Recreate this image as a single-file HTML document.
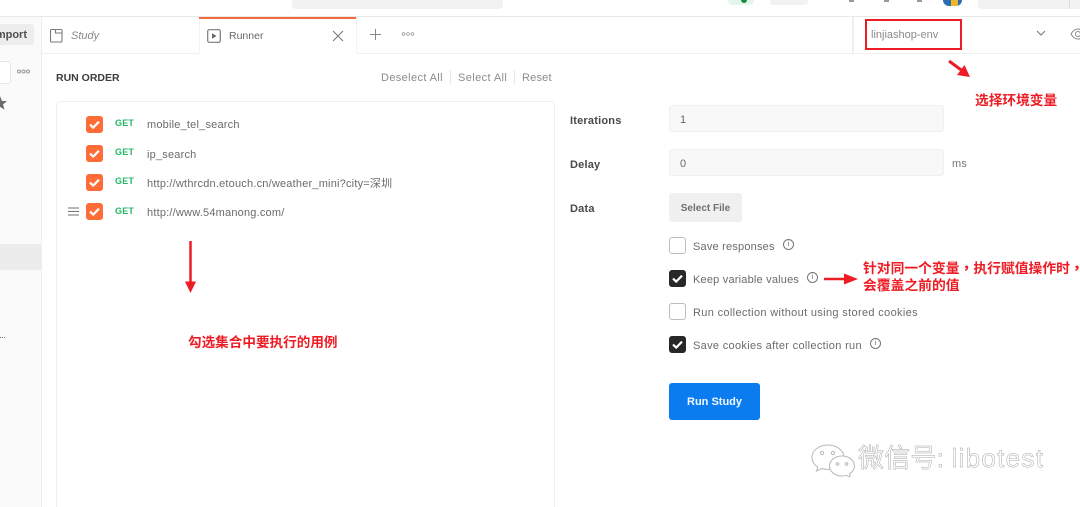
<!DOCTYPE html>
<html><head><meta charset="utf-8">
<style>
html,body{margin:0;padding:0;width:1080px;height:507px;overflow:hidden}
#w{position:absolute;left:0;top:0;width:1080px;height:507px;overflow:hidden;background:#fff;font-family:"Liberation Sans","Noto Sans CJK SC",sans-serif;color:#505050}
.a{position:absolute;white-space:nowrap}
.t{font-size:11px;line-height:14px;letter-spacing:.2px;color:#6b6b6b}
.cb{position:absolute;width:17px;height:17px;border-radius:3px;background:#ff6c37}
.cb svg,.ck svg{position:absolute;left:0;top:0}
.ck{position:absolute;left:669px;width:17px;height:17px;box-sizing:border-box;border-radius:3px;border:1px solid #bdbdbd;background:#fff}
.ck.on{background:#282828;border-color:#282828}
.ck.on svg{left:-1px;top:-1px}
.get{position:absolute;left:115px;font-size:9px;line-height:12px;font-weight:bold;color:#26b867;letter-spacing:.2px}
.lb{position:absolute;font-size:11px;line-height:14px;font-weight:bold;color:#4a4a4a;left:570px;letter-spacing:.2px}
.in{position:absolute;left:669px;height:27px;background:#f8f8f8;border:1px solid #f0f0f0;border-radius:3px;box-sizing:border-box;font-size:11px;line-height:29px;padding-left:10px;color:#666}
.red{position:absolute;white-space:nowrap;color:#ee1c25;font-weight:bold;font-size:13.700px;line-height:17px;font-family:"Liberation Sans","Noto Sans CJK SC",sans-serif}
.red b{font-family:"Noto Sans CJK TC",sans-serif}
.i{position:absolute;width:9px;height:9px;border:1px solid #777;border-radius:50%;font-size:7px;line-height:9px;text-align:center;color:#666}
.sep{position:absolute;width:1px;height:14px;background:#e6e6e6;top:70px}
</style></head><body><div id="w">

<!-- top bar -->
<div class="a" style="left:0;top:16px;width:1080px;height:1px;background:#e8e8e8"></div>
<div class="a" style="left:292px;top:0;width:211px;height:9px;background:#f2f2f2;border-radius:0 0 4px 4px"></div>
<div class="a" style="left:728px;top:0;width:26px;height:5px;background:#e3f8ea;border-radius:0 0 8px 8px"></div>
<div class="a" style="left:741px;top:0;width:6px;height:3px;background:#1c8a45;border-radius:0 0 3px 3px"></div>
<div class="a" style="left:770px;top:0;width:38px;height:5px;background:#f2f2f2;border-radius:0 0 3px 3px"></div>
<div class="a" style="left:849px;top:0;width:5px;height:2px;background:#999"></div>
<div class="a" style="left:884px;top:0;width:5px;height:2px;background:#999"></div>
<div class="a" style="left:917px;top:0;width:5px;height:2px;background:#999"></div>
<div class="a" style="left:943px;top:0;width:19px;height:6px;background:#2b6cb0;border-radius:0 0 10px 10px;overflow:hidden"><div style="position:absolute;left:8px;top:0;width:7px;height:6px;background:#f0b429"></div></div>
<div class="a" style="left:978px;top:0;width:102px;height:9px;background:#f2f2f2;border-radius:0 0 0 4px"></div>
<div class="a" style="left:1069px;top:0;width:1px;height:9px;background:#ddd"></div>

<!-- sidebar -->
<div class="a" style="left:0;top:17px;width:41px;height:490px;background:#fafafa"></div>
<div class="a" style="left:41px;top:17px;width:1px;height:490px;background:#efefef"></div>
<div class="a" style="left:0;top:24px;width:34px;height:21px;background:#ededed;border-radius:0 3px 3px 0;overflow:hidden"><span class="a" style="right:7px;top:4px;font-size:11px;line-height:14px;font-weight:bold;color:#505050">Import</span></div>
<div class="a" style="left:-5px;top:61px;width:14px;height:21px;border:1px solid #e6e6e6;border-radius:3px;background:#fff"></div>
<svg class="a" style="left:16px;top:68px" width="15" height="7"><circle cx="3" cy="3.500" r="1.500" fill="none" stroke="#999"/><circle cx="7.500" cy="3.500" r="1.500" fill="none" stroke="#999"/><circle cx="12" cy="3.500" r="1.500" fill="none" stroke="#999"/></svg>
<svg class="a" style="left:-7px;top:96px" width="16" height="15"><path d="M7 0l2 5h5l-4 3.400 1.600 5.400L7 10.800 2.400 13.800 4 8.400 0 5h5z" fill="#6b6b6b"/></svg>
<div class="a" style="left:0;top:244px;width:41px;height:26px;background:#ececec"></div>
<div class="a" style="left:0;top:337px;width:5px;height:1px;border-top:1px dotted #777"></div>

<!-- tab bar -->
<div class="a" style="left:42px;top:53px;width:1038px;height:1px;background:#f0f0f0"></div>
<div class="a" style="left:199px;top:17px;width:1px;height:37px;background:#f2f2f2"></div>
<div class="a" style="left:356px;top:17px;width:1px;height:37px;background:#f2f2f2"></div>
<div class="a" style="left:199px;top:53px;width:158px;height:1px;background:#fff"></div>
<div class="a" style="left:199px;top:17px;width:157px;height:2px;background:#f26b3a"></div>
<svg class="a" style="left:49px;top:28px" width="15" height="16" fill="none"><path d="M1.500 2.500a1 1 0 0 1 1-1h9.500a1 1 0 0 1 1 1v10.500a1 1 0 0 1-1 1H2.500a1 1 0 0 1-1-1z" stroke="#7a7a7a" stroke-width="1.100"/><path d="M6.500 1.500v3.500h6.500" stroke="#7a7a7a" stroke-width="1.100"/></svg>
<span class="a t" style="left:71px;top:29px;font-style:italic;color:#8a8a8a;letter-spacing:0">Study</span>
<svg class="a" style="left:207px;top:29px" width="14" height="14" fill="none"><rect x=".7" y=".7" width="12.600" height="12.600" rx="1.500" stroke="#7a7a7a" stroke-width="1.200"/><path d="M5 4.200l4.500 2.800L5 9.800z" fill="#666"/></svg>
<span class="a t" style="left:229px;top:29px;color:#666;font-size:10.500px;letter-spacing:0">Runner</span>
<svg class="a" style="left:332px;top:30px" width="12" height="12"><path d="M1 1l10 10M11 1L1 11" stroke="#777" stroke-width="1"/></svg>
<svg class="a" style="left:369px;top:28px" width="13" height="13"><path d="M6.500 1v11M1 6.500h11" stroke="#888" stroke-width="1"/></svg>
<svg class="a" style="left:401px;top:31px" width="15" height="6"><circle cx="2.500" cy="3" r="1.400" fill="none" stroke="#999" stroke-width=".8"/><circle cx="7" cy="3" r="1.400" fill="none" stroke="#999" stroke-width=".8"/><circle cx="11.500" cy="3" r="1.400" fill="none" stroke="#999" stroke-width=".8"/></svg>
<div class="a" style="left:852px;top:17px;width:2px;height:36px;background:#efefef"></div>
<div class="a" style="left:865px;top:19px;width:97px;height:31px;box-sizing:border-box;border:2px solid #ee1c25"></div>
<span class="a t" style="left:871px;top:28px;color:#8a8a8a;letter-spacing:0">linjiashop-env</span>
<svg class="a" style="left:1036px;top:30px" width="10" height="7"><path d="M1 1l4 4 4-4" fill="none" stroke="#777" stroke-width="1"/></svg>
<svg class="a" style="left:1070px;top:27px" width="12" height="14" fill="none"><path d="M1 7c2-3.500 4-5 7-5s5 1.500 7 5c-2 3.500-4 5-7 5s-5-1.500-7-5z" stroke="#888"/><circle cx="8" cy="7" r="2.500" stroke="#888"/></svg>

<!-- run order header -->
<span class="a" style="left:56px;top:71px;font-size:10.500px;line-height:14px;font-weight:bold;color:#3d3d3d">RUN ORDER</span>
<span class="a t" style="left:381px;top:71px;color:#8c8c8c;letter-spacing:.37px">Deselect All</span>
<div class="sep" style="left:450px"></div>
<span class="a t" style="left:458px;top:71px;color:#8c8c8c;letter-spacing:.4px">Select All</span>
<div class="sep" style="left:514px"></div>
<span class="a t" style="left:522px;top:71px;color:#8c8c8c">Reset</span>

<!-- list -->
<div class="a" style="left:56px;top:101px;width:499px;height:420px;box-sizing:border-box;border:1px solid #efefef;border-radius:4px"></div>

<div class="cb" style="left:86px;top:116px"><svg width="17" height="17"><path d="M4 8.600l3.200 3 5.800-6" fill="none" stroke="#fff" stroke-width="2.200"/></svg></div>
<span class="get" style="top:117px">GET</span><span class="a t" style="left:147px;top:118px">mobile_tel_search</span>

<div class="cb" style="left:86px;top:145px"><svg width="17" height="17"><path d="M4 8.600l3.200 3 5.800-6" fill="none" stroke="#fff" stroke-width="2.200"/></svg></div>
<span class="get" style="top:146px">GET</span><span class="a t" style="left:147px;top:148px">ip_search</span>

<div class="cb" style="left:86px;top:174px"><svg width="17" height="17"><path d="M4 8.600l3.200 3 5.800-6" fill="none" stroke="#fff" stroke-width="2.200"/></svg></div>
<span class="get" style="top:175px">GET</span><span class="a t" style="left:147px;top:177px">http://wthrcdn.etouch.cn/weather_mini?city=深圳</span>

<svg class="a" style="left:68px;top:207px" width="11" height="10"><path d="M0 1h11M0 4.500h11M0 8h11" stroke="#707070" stroke-width="1"/></svg>
<div class="cb" style="left:86px;top:203px"><svg width="17" height="17"><path d="M4 8.600l3.200 3 5.800-6" fill="none" stroke="#fff" stroke-width="2.200"/></svg></div>
<span class="get" style="top:205px">GET</span><span class="a t" style="left:147px;top:206px">http://www.54manong.com/</span>

<!-- red arrow down -->
<svg class="a" style="left:184px;top:239px" width="13" height="56"><path d="M6.500 2v42" stroke="#ee1c25" stroke-width="2.500"/><path d="M1 42.500h11L6.500 54z" fill="#ee1c25"/></svg>
<span class="red" style="left:188px;top:334px;font-size:13.600px">勾选集合中要执行的用例</span>

<!-- right form -->
<span class="lb" style="top:114px">Iterations</span>
<div class="in" style="top:105px;width:275px">1</div>
<span class="lb" style="top:158px">Delay</span>
<div class="in" style="top:149px;width:275px">0</div>
<span class="a t" style="left:952px;top:157px;color:#777">ms</span>
<span class="lb" style="top:202px">Data</span>
<div class="a" style="left:669px;top:193px;width:73px;height:29px;background:#f0f0f0;border-radius:3px;font-size:10px;line-height:31px;font-weight:bold;color:#707070;text-align:center">Select File</div>

<div class="ck" style="top:237px"></div>
<span class="a t" style="left:693px;top:240px">Save responses</span>
<div class="i" style="left:783px;top:239px">i</div>

<div class="ck on" style="top:270px"><svg width="17" height="17"><path d="M4 8.600l3.200 3 5.800-6" fill="none" stroke="#fff" stroke-width="2.200"/></svg></div>
<span class="a t" style="left:693px;top:273px">Keep variable values</span>
<div class="i" style="left:807px;top:272px">i</div>

<div class="ck" style="top:303px"></div>
<span class="a t" style="left:693px;top:306px;letter-spacing:.34px">Run collection without using stored cookies</span>

<div class="ck on" style="top:336px"><svg width="17" height="17"><path d="M4 8.600l3.200 3 5.800-6" fill="none" stroke="#fff" stroke-width="2.200"/></svg></div>
<span class="a t" style="left:693px;top:339px;letter-spacing:.32px">Save cookies after collection run</span>
<div class="i" style="left:870px;top:338px">i</div>

<div class="a" style="left:669px;top:383px;width:91px;height:37px;background:#0a7cf0;border-radius:3px;color:#f2f8ff;font-size:11px;line-height:39px;font-weight:bold;text-align:center">Run Study</div>

<!-- annotations -->
<svg class="a" style="left:946px;top:58px" width="26" height="22"><path d="M3 3l15 11" stroke="#ee1c25" stroke-width="3"/><path d="M24 19l-13-2 7.500-10z" fill="#ee1c25"/></svg>
<span class="red" style="left:975px;top:92px">选择环境变量</span>
<svg class="a" style="left:823px;top:272px" width="37" height="14"><path d="M1 7h26" stroke="#ee1c25" stroke-width="2.500"/><path d="M21 1.500L35 7l-14 5.500z" fill="#ee1c25"/></svg>
<span class="red" style="left:863px;top:259px;font-size:13.800px">针对同一个变量<b>，</b>执行赋值操作时<b>，</b></span>
<span class="red" style="left:863px;top:277px;font-size:13.800px">会覆盖之前的值</span>

<!-- watermark -->
<svg class="a" style="left:810px;top:443px" width="46" height="34" fill="#fff" stroke="#b8b8b8" stroke-width="1"><path d="M18 2C9 2 2 7.500 2 14.500c0 4 2.300 7.300 5.800 9.500L6.500 28l5-2.500c2 .6 4.200.9 6.500.9 9 0 16-5.500 16-12S27 2 18 2z"/><path d="M32 13c-7 0-12.500 4.500-12.500 10S25 33 32 33c1.500 0 3-.2 4.300-.7l4.200 2-1-3.500c3-2 5-4.800 5-7.800C44.500 17.500 39 13 32 13z"/><circle cx="12" cy="10" r="1.600"/><circle cx="23" cy="10" r="1.600"/><circle cx="27.500" cy="21" r="1.300"/><circle cx="36.500" cy="21" r="1.300"/></svg>
<span class="a" style="left:858px;top:441px;font-size:26px;line-height:34px;color:#fff;letter-spacing:.2px;-webkit-text-stroke:.5px #a8a8a8">微信号: <span style="letter-spacing:1.300px">libotest</span></span>
</div></body></html>
